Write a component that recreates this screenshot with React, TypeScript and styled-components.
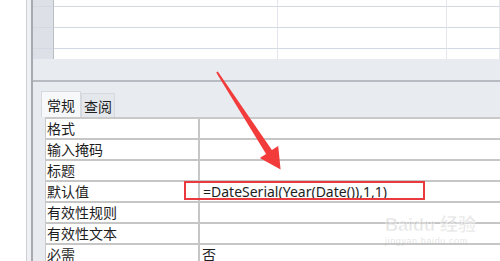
import React from 'react';
import styled, { createGlobalStyle } from 'styled-components';

const GlobalStyle = createGlobalStyle`
  html, body {
    margin: 0;
    padding: 0;
    background: #ffffff;
  }
  body {
    font-family: "Noto Sans", "Noto Sans CJK SC", sans-serif;
  }
`;

const Screen = styled.div`
  position: relative;
  width: 500px;
  height: 261px;
  display: flex;
  overflow: hidden;
  background: #ffffff;
`;

const Blank = styled.div`
  width: 26px;
  flex-shrink: 0;
  background: #ffffff;
`;

const FrameEdge = styled.div`
  width: 4px;
  flex-shrink: 0;
  border-left: 1px solid #cdd0d4;
  border-right: 2px solid #a7abb1;
  background: #eef0f3;
`;

const Main = styled.div`
  flex: 1;
  display: flex;
  flex-direction: column;
  min-width: 0;
`;

const Sheet = styled.div`
  height: 59px;
  flex-shrink: 0;
  display: grid;
  grid-template-columns: 21px 224px 169px 1fr;
  grid-template-rows: 7px 21px 21px 10px;
  background: #ffffff;
`;

const SheetCell = styled.div<{ $selector?: boolean; $last?: boolean }>`
  box-sizing: border-box;
  background: ${({ $selector }) => ($selector ? '#dde1e7' : '#ffffff')};
  border-right: 1px solid ${({ $selector }) => ($selector ? '#b9bdc4' : '#e3e6ee')};
  border-bottom: ${({ $last }) => ($last ? 'none' : '1px solid #d3d8e2')};
`;

const Panel = styled.div`
  flex: 1;
  display: flex;
  flex-direction: column;
  background: #e8ebef;
`;

const PanelBand = styled.div`
  height: 21px;
  flex-shrink: 0;
  border-bottom: 2px solid #b7bac0;
`;

const TabRow = styled.div`
  display: flex;
  align-items: flex-end;
  padding: 9px 0 0 8px;
  height: 26px;
`;

const Tab = styled.div<{ $active?: boolean }>`
  box-sizing: border-box;
  height: ${({ $active }) => ($active ? '26px' : '24px')};
  padding: 0 ${({ $active }) => ($active ? '5px' : '2px')};
  display: flex;
  align-items: center;
  font-size: 14px;
  color: #1f1f1f;
  background: ${({ $active }) => ($active ? '#f7f8f9' : '#e4e7eb')};
  border: 1px solid #d6d9de;
  border-bottom: none;
  font-family: "Noto Sans CJK SC", sans-serif;
`;

const PropGrid = styled.div`
  margin-left: 12px;
  border-top: 2px solid #c9c9c9;
  border-left: 1px solid #c9c9c9;
  background: #ffffff;
`;

const PropRow = styled.div`
  display: grid;
  grid-template-columns: 154px 1fr;
  height: 21px;
  box-sizing: border-box;
  border-bottom: 2px solid #c6c6c6;
`;

const PropLabel = styled.div`
  padding-left: 1px;
  font-family: "Noto Sans CJK SC", sans-serif;
  font-size: 14px;
  line-height: 19px;
  color: #1e1e1e;
  border-right: 2px solid #c6c6c6;
  white-space: nowrap;
  overflow: hidden;
`;

const PropValue = styled.div<{ $indent: number }>`
  padding-left: ${({ $indent }) => $indent}px;
  font-family: "Noto Sans", "Noto Sans CJK SC", sans-serif;
  font-size: 14px;
  line-height: 19px;
  color: #1e1e1e;
  white-space: nowrap;
`;

const Highlight = styled.div`
  position: absolute;
  left: 184px;
  top: 181px;
  width: 241px;
  height: 19px;
  box-sizing: border-box;
  border: 2px solid #ea3a3f;
  pointer-events: none;
`;

const Overlay = styled.svg`
  position: absolute;
  left: 0;
  top: 0;
  pointer-events: none;
`;

const Watermark = styled.div`
  position: absolute;
  left: 385px;
  top: 214px;
  display: flex;
  flex-direction: column;
  align-items: flex-start;
  color: rgba(185, 185, 185, 0.4);
  white-space: nowrap;
  pointer-events: none;
`;

const MarkMain = styled.div`
  font-family: "Liberation Sans", "Noto Sans CJK SC", sans-serif;
  font-size: 18px;
  font-weight: 700;
  line-height: 22px;
  -webkit-text-stroke: 1px rgba(255, 255, 255, 0.6);
`;

const MarkSub = styled.div`
  font-family: "Liberation Sans", sans-serif;
  font-size: 9px;
  line-height: 10px;
  letter-spacing: 0.6px;
`;

const props = [
  { label: '格式', value: '' },
  { label: '输入掩码', value: '' },
  { label: '标题', value: '' },
  { label: '默认值', value: '=DateSerial(Year(Date()),1,1)', indent: 3 },
  { label: '有效性规则', value: '' },
  { label: '有效性文本', value: '' },
  { label: '必需', value: '否' },
];

export default function App() {
  const sheetRows = [0, 1, 2, 3];
  return (
    <>
      <GlobalStyle />
      <Screen>
        <Blank />
        <FrameEdge />
        <Main>
          <Sheet>
            {sheetRows.map((r) =>
              [0, 1, 2, 3].map((c) => (
                <SheetCell key={`${r}-${c}`} $selector={c === 0} $last={r === 3} />
              )),
            )}
          </Sheet>
          <Panel>
            <PanelBand />
            <TabRow>
              <Tab $active>常规</Tab>
              <Tab>查阅</Tab>
            </TabRow>
            <PropGrid>
              {props.map((p) => (
                <PropRow key={p.label}>
                  <PropLabel>{p.label}</PropLabel>
                  <PropValue $indent={p.indent ?? 2}>{p.value}</PropValue>
                </PropRow>
              ))}
            </PropGrid>
          </Panel>
        </Main>
        <Highlight />
        <Watermark>
          <MarkMain>Baidu 经验</MarkMain>
          <MarkSub>jingyan.baidu.com</MarkSub>
        </Watermark>
        <Overlay width="500" height="261" viewBox="0 0 500 261">
          <polygon
            points="216.2,72.6 217.8,71.4 271.9,150.1 278.2,145.9 280.6,169.5 259.8,158.1 266.1,153.9"
            fill="#f23b3b"
          />
        </Overlay>
      </Screen>
    </>
  );
}
